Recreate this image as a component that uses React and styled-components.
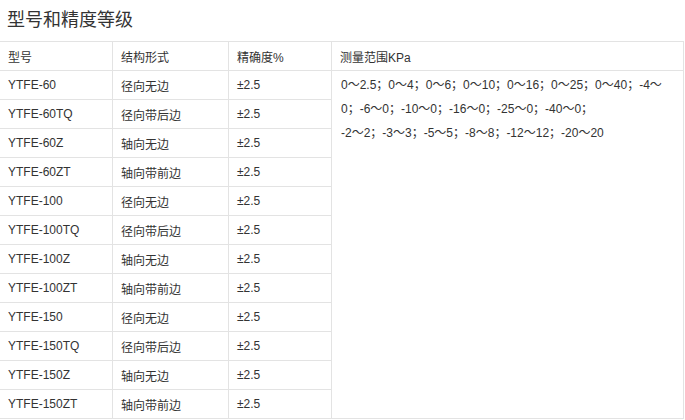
import React from 'react';
import styled, { createGlobalStyle } from 'styled-components';

const GlobalStyle = createGlobalStyle`
  body {
    margin: 0;
    background: #fff;
    font-family: 'Liberation Sans', Arial, 'Noto Sans CJK SC', sans-serif;
    color: #333;
  }
`;

const rows = [
  ['YTFE-60', '径向无边'],
  ['YTFE-60TQ', '径向带后边'],
  ['YTFE-60Z', '轴向无边'],
  ['YTFE-60ZT', '轴向带前边'],
  ['YTFE-100', '径向无边'],
  ['YTFE-100TQ', '径向带后边'],
  ['YTFE-100Z', '轴向无边'],
  ['YTFE-100ZT', '轴向带前边'],
  ['YTFE-150', '径向无边'],
  ['YTFE-150TQ', '径向带后边'],
  ['YTFE-150Z', '轴向无边'],
  ['YTFE-150ZT', '轴向带前边'],
];

const Page = styled.div`
  width: 685px;
  height: 420px;
  overflow: hidden;
`;

const Title = styled.h3`
  margin: 0;
  height: 41px;
  line-height: 40px;
  padding-left: 7px;
  font-size: 18px;
  font-weight: normal;
  color: #333;
  font-family: 'Liberation Sans', 'Noto Sans CJK SC', sans-serif;
`;

const Table = styled.table`
  border-collapse: collapse;
  table-layout: fixed;
  width: 684px;
  margin-left: -1px;
  font-size: 12px;
`;

const Cell = styled.td`
  border: 1px solid #e3e3e3;
  height: 28px;
  padding: 0 8px;
  vertical-align: middle;
  white-space: nowrap;
  color: #333;
`;

const RangeCell = styled(Cell)`
  vertical-align: top;
  padding: 2px 9px;
  line-height: 24px;
`;

export default function App() {
  return (
    <Page>
      <GlobalStyle />
      <Title>型号和精度等级</Title>
      <Table>
        <colgroup>
          <col style={{ width: 113 }} />
          <col style={{ width: 116 }} />
          <col style={{ width: 103 }} />
          <col style={{ width: 352 }} />
        </colgroup>
        <tbody>
          <tr>
            <Cell>型号</Cell>
            <Cell>结构形式</Cell>
            <Cell>精确度%</Cell>
            <Cell>测量范围KPa</Cell>
          </tr>
          {rows.map(([model, form], i) => (
            <tr key={model}>
              <Cell>{model}</Cell>
              <Cell>{form}</Cell>
              <Cell>±2.5</Cell>
              {i === 0 && (
                <RangeCell rowSpan={12}>
                  0～2.5；0～4；0～6；0～10；0～16；0～25；0～40；-4～
                  <br />
                  0；-6～0；-10～0；-16～0；-25～0；-40～0；
                  <br />
                  -2～2；-3～3；-5～5；-8～8；-12～12；-20～20
                </RangeCell>
              )}
            </tr>
          ))}
        </tbody>
      </Table>
    </Page>
  );
}
